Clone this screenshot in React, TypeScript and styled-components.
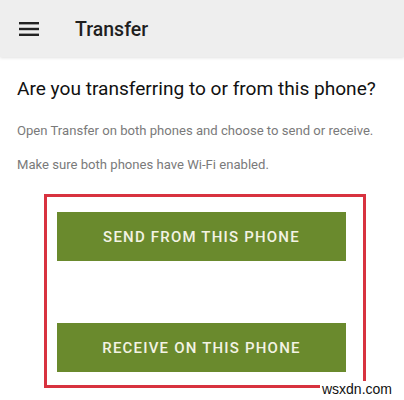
import React from 'react';
import styled, { createGlobalStyle } from 'styled-components';

const Global = createGlobalStyle`
  html, body {
    margin: 0;
    padding: 0;
    background: #ffffff;
  }
  body {
    font-family: Roboto, "Noto Sans", "Liberation Sans", sans-serif;
    width: 404px;
    height: 400px;
    overflow: hidden;
  }
  * {
    box-sizing: border-box;
  }
`;

const Page = styled.div`
  position: relative;
  width: 404px;
  height: 400px;
  background: #fff;
`;

const AppBar = styled.header`
  display: flex;
  align-items: center;
  height: 57px;
  padding-left: 19px;
  padding-top: 1px;
  background: #eeeeee;
  box-shadow: 0 1px 3px rgba(0, 0, 0, 0.12);
`;

const MenuButton = styled.div`
  display: flex;
  width: 20px;
  height: 14px;
`;

const Title = styled.h1`
  margin: 0 0 0 36px;
  font-size: 19.5px;
  font-weight: 500;
  color: #1f1f1f;
`;

const Content = styled.main`
  display: flex;
  flex-direction: column;
  padding: 0 17px;
`;

const Heading = styled.h2`
  margin: 19px 0 0;
  font-size: 19.1px;
  line-height: 26px;
  font-weight: 400;
  color: #111;
  white-space: nowrap;
`;

const Note = styled.p<{ $gap: number }>`
  margin: ${p => p.$gap}px 0 0;
  font-size: 13.1px;
  line-height: 20px;
  color: #7a7a7a;
  white-space: nowrap;
`;

const Highlight = styled.div`
  display: flex;
  flex-direction: column;
  gap: 62px;
  width: 322px;
  margin: 19px 0 0 27px;
  padding: 15px 17px 13px 10px;
  border: 3px solid #d8323f;
`;

const ActionButton = styled.button`
  height: 49px;
  border: none;
  background: #6a8a2d;
  color: #f3f3e4;
  font-family: Roboto, "Noto Sans", sans-serif;
  font-size: 15px;
  font-weight: 500;
  letter-spacing: 1.2px;
  cursor: pointer;
`;

const Watermark = styled.span`
  position: absolute;
  right: 10px;
  bottom: 3px;
  font-family: "Liberation Sans", Arial, sans-serif;
  font-size: 14px;
  color: #111;
  background: #fff;
  padding: 0 2px;
`;

export default function App() {
  return (
    <Page>
      <Global />
      <AppBar>
        <MenuButton>
          <svg width="20" height="14" viewBox="0 0 20 14">
            <rect x="0" y="0" width="20" height="2.4" fill="#222" />
            <rect x="0" y="5.8" width="20" height="2.4" fill="#222" />
            <rect x="0" y="11.6" width="20" height="2.4" fill="#222" />
          </svg>
        </MenuButton>
        <Title>Transfer</Title>
      </AppBar>
      <Content>
        <Heading>Are you transferring to or from this phone?</Heading>
        <Note $gap={19}>Open Transfer on both phones and choose to send or receive.</Note>
        <Note $gap={14}>Make sure both phones have Wi-Fi enabled.</Note>
        <Highlight>
          <ActionButton>SEND FROM THIS PHONE</ActionButton>
          <ActionButton>RECEIVE ON THIS PHONE</ActionButton>
        </Highlight>
      </Content>
      <Watermark>wsxdn.com</Watermark>
    </Page>
  );
}
